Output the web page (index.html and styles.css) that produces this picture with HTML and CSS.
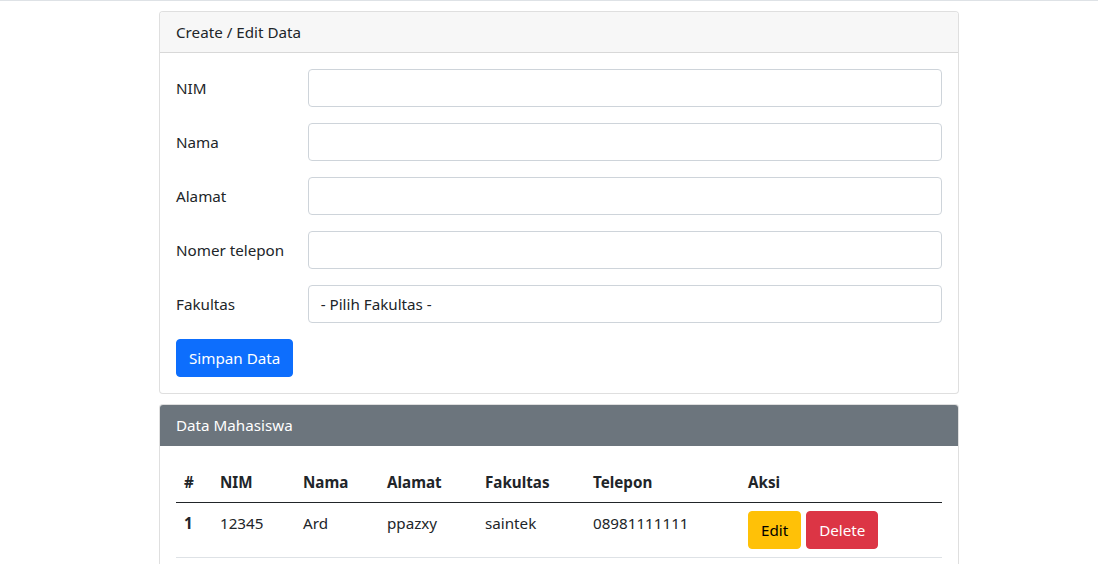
FILE: index.html
```html
<!DOCTYPE html>
<html lang="id">
<head>
<meta charset="utf-8">
<title>Data Mahasiswa</title>
<link rel="stylesheet" href="styles.css">
</head>
<body>
<div class="topline"></div>
<main class="container">
  <section class="card">
    <div class="card-header">Create / Edit Data</div>
    <form class="card-body">
      <div class="form-row">
        <label class="col-label">NIM</label>
        <input class="form-control" type="text">
      </div>
      <div class="form-row">
        <label class="col-label">Nama</label>
        <input class="form-control" type="text">
      </div>
      <div class="form-row">
        <label class="col-label">Alamat</label>
        <input class="form-control" type="text">
      </div>
      <div class="form-row">
        <label class="col-label">Nomer telepon</label>
        <input class="form-control" type="text">
      </div>
      <div class="form-row">
        <label class="col-label">Fakultas</label>
        <div class="form-control select">- Pilih Fakultas -</div>
      </div>
      <button type="button" class="btn btn-primary">Simpan Data</button>
    </form>
  </section>

  <section class="card card-second">
    <div class="card-header dark">Data Mahasiswa</div>
    <div class="card-body">
      <table class="table">
        <thead>
          <tr>
            <th class="c1">#</th>
            <th class="c2">NIM</th>
            <th class="c3">Nama</th>
            <th class="c4">Alamat</th>
            <th class="c5">Fakultas</th>
            <th class="c6">Telepon</th>
            <th class="c7">Aksi</th>
          </tr>
        </thead>
        <tbody>
          <tr>
            <th>1</th>
            <td>12345</td>
            <td>Ard</td>
            <td>ppazxy</td>
            <td>saintek</td>
            <td>08981111111</td>
            <td class="actions"><button class="btn btn-warning">Edit</button><button class="btn btn-danger">Delete</button></td>
          </tr>
        </tbody>
      </table>
    </div>
  </section>
</main>
</body>
</html>
```

FILE: styles.css
```css
* { box-sizing: border-box; }
html, body { margin: 0; padding: 0; }
body {
  font-family: "Noto Sans", "Open Sans", sans-serif;
  font-size: 15.2px;
  line-height: 24px;
  color: #212529;
  background: #fff;
}
.topline { height: 1px; background: #dee2e6; }
.container {
  width: 800px;
  margin-left: 159px;
  padding-top: 10px;
}
.card {
  border: 1px solid rgba(0,0,0,0.125);
  border-radius: 4px;
  overflow: hidden;
  background: #fff;
}
.card-second { margin-top: 10px; }
.card-header {
  padding: 8px 16px;
  background: #f7f7f7;
  border-bottom: 1px solid rgba(0,0,0,0.125);
}
.card-header.dark { background: #6c757d; color: #fff; border-bottom-color: #6c757d; }
.card-body { padding: 16px; display: block; margin: 0; }
.form-row {
  display: flex;
  align-items: flex-start;
  margin-bottom: 16px;
}
.col-label {
  width: 131.67px;
  flex: none;
  padding-top: 7px;
  padding-bottom: 7px;
}
.form-control {
  flex: 1;
  height: 38px;
  border: 1px solid #ced4da;
  border-radius: 4px;
  padding: 6px 12px;
  font: inherit;
  color: #212529;
  background: #fff;
}
.select { line-height: 24px; }
.btn {
  display: inline-block;
  font: inherit;
  line-height: 24px;
  padding: 6px 12px;
  border: 1px solid transparent;
  border-radius: 4px;
  cursor: pointer;
}
.btn-primary { background: #0d6efd; color: #fff; border-color: #0d6efd; }
.btn-warning { background: #ffc107; color: #000; border-color: #ffc107; }
.btn-danger { background: #dc3545; color: #fff; border-color: #dc3545; margin-left: 5px; }
.table {
  width: 100%;
  border-collapse: collapse;
  table-layout: fixed;
}
.table th, .table td {
  text-align: left;
  padding: 8px;
  vertical-align: top;
  border-bottom: 1px solid #dee2e6;
}
.table thead th { border-bottom: 1px solid #212529; font-weight: 700; vertical-align: bottom; }
.table tbody th { font-weight: 700; }
.c1 { width: 36px; }
.c2 { width: 83px; }
.c3 { width: 84px; }
.c4 { width: 98px; }
.c5 { width: 108px; }
.c6 { width: 155px; }
.c7 { width: auto; }
.actions { white-space: nowrap; }
```
